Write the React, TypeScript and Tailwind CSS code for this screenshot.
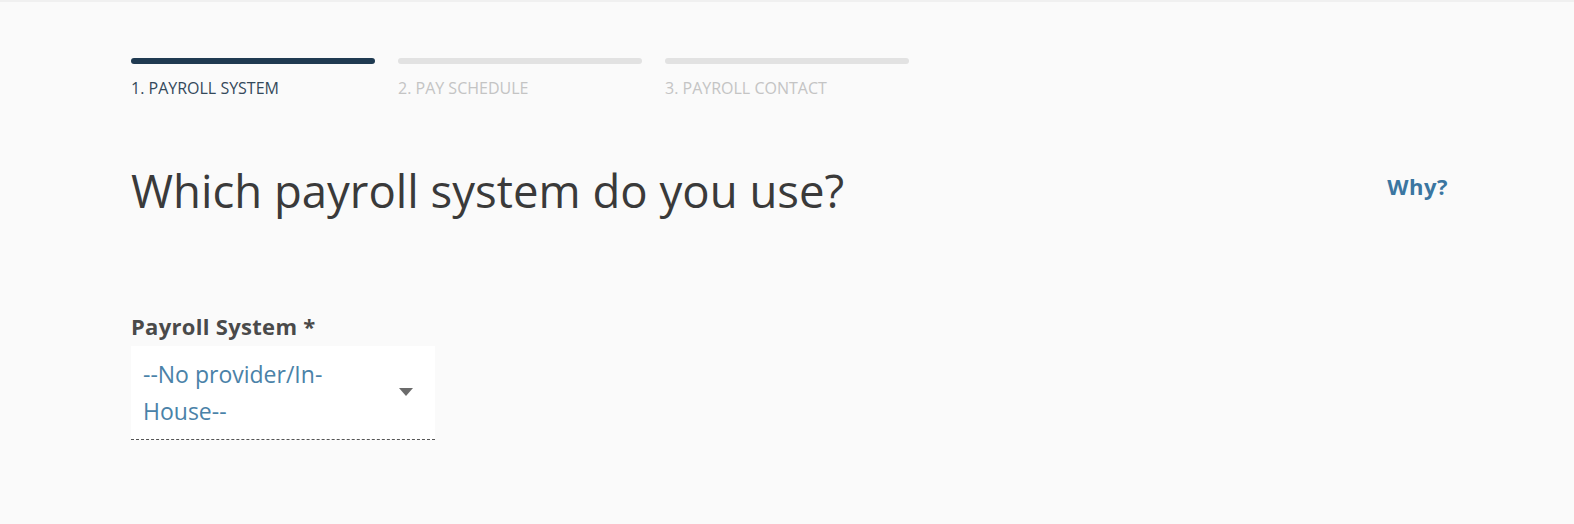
const steps = [
  { label: '1. PAYROLL SYSTEM', active: true },
  { label: '2. PAY SCHEDULE', active: false },
  { label: '3. PAYROLL CONTACT', active: false },
];

export default function App() {
  return (
    <div
      className="min-h-[524px] w-full bg-[#fafafa] border-t-2 border-[#f0f0f0]"
      style={{ fontFamily: '"Open Sans", Lato, sans-serif' }}
    >
      <div className="pl-[131px] pr-[126px] pt-[56px]">
        <div className="flex gap-[23px]">
          {steps.map((s) => (
            <div key={s.label} className="w-[244px]">
              <div className={`h-[6px] rounded-full ${s.active ? 'bg-[#1f3a51]' : 'bg-[#e2e2e2]'}`} />
              <div className={`mt-[14px] text-[16px] leading-[20px] ${s.active ? 'text-[#34495a]' : 'text-[#c4c4c4]'}`}>
                {s.label}
              </div>
            </div>
          ))}
        </div>

        <div className="mt-[61px] flex items-start justify-between">
          <h1 className="text-[45.5px] leading-[62px] text-[#3a3a3a]">Which payroll system do you use?</h1>
          <a className="mt-[11px] text-[22px] font-bold tracking-[0.5px] text-[#3b76a1]">Why?</a>
        </div>

        <div className="mt-[90px]">
          <div className="text-[22px] font-bold leading-[30px] tracking-[0.3px] text-[#4a4a4a]">Payroll System *</div>
          <div className="mt-[5px] flex h-[94px] w-[304px] items-center justify-between border-b border-dashed border-[#555] bg-white pl-[12px] pr-[22px]">
            <div className="w-[230px] text-[23px] leading-[37px] text-[#4a82a8]">--No provider/In-House--</div>
            <svg width="14" height="8" viewBox="0 0 14 8" className="mb-[2px]">
              <path d="M0 0h14L7 8z" fill="#6b6b6b" />
            </svg>
          </div>
        </div>
      </div>
    </div>
  );
}
